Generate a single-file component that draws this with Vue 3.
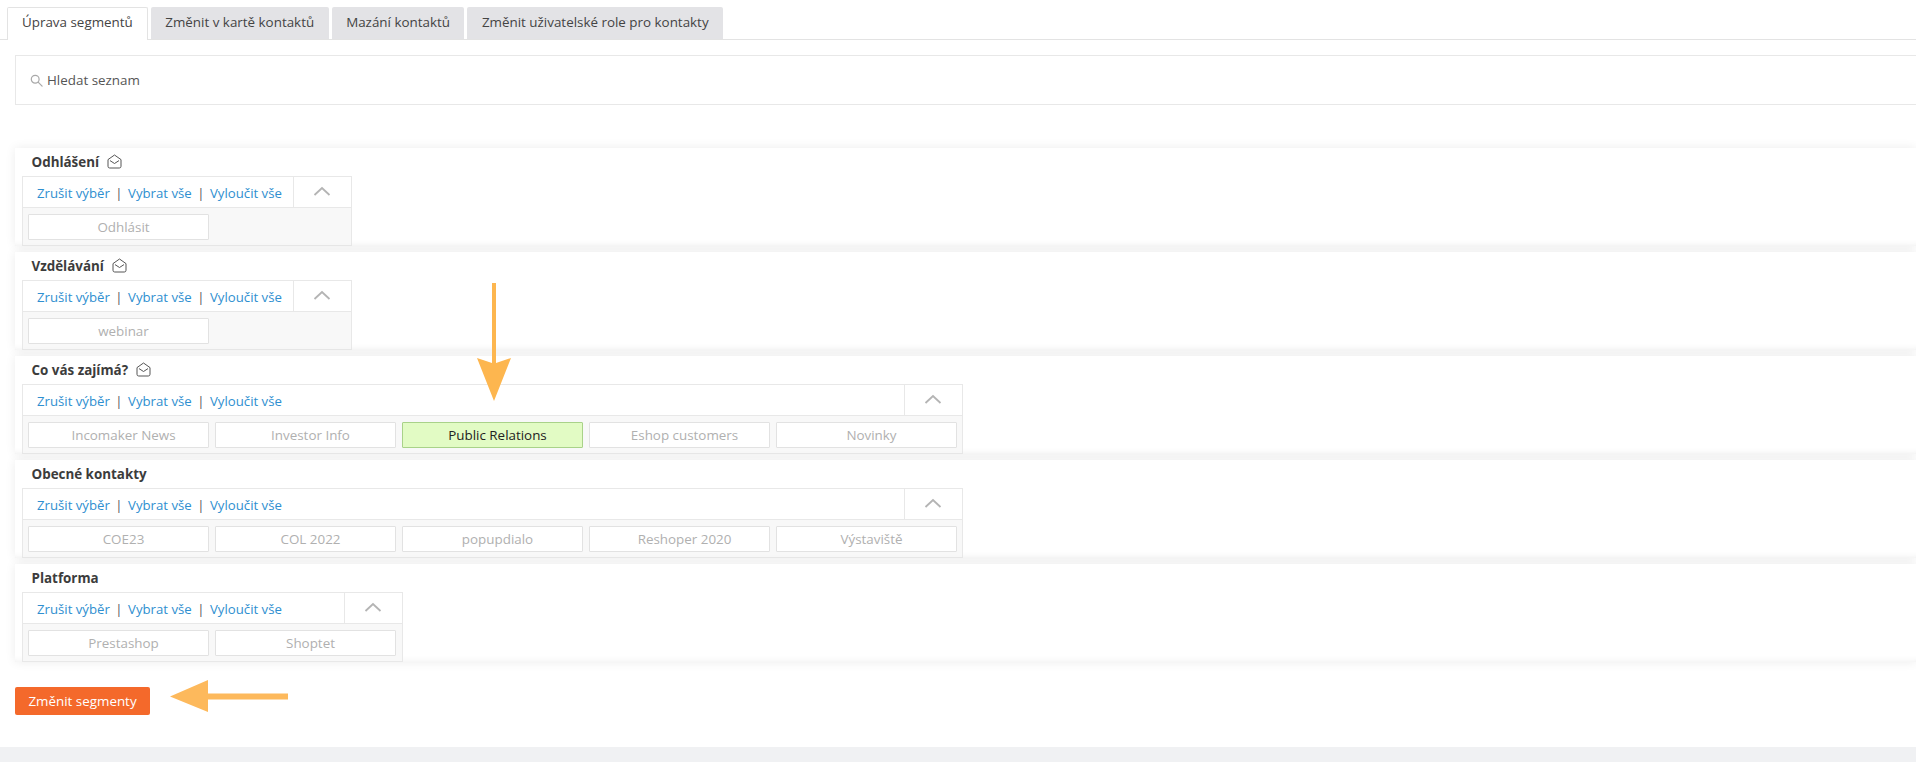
<script setup>
const tabs = ['Úprava segmentů', 'Změnit v kartě kontaktů', 'Mazání kontaktů', 'Změnit uživatelské role pro kontakty']
const groups = [
  { title: 'Odhlášení', icon: true, cls: 'w1', items: ['Odhlásit'] },
  { title: 'Vzdělávání', icon: true, cls: 'w1', items: ['webinar'] },
  { title: 'Co vás zajímá?', icon: true, cls: 'w5', items: ['Incomaker News', 'Investor Info', 'Public Relations', 'Eshop customers', 'Novinky'], active: 'Public Relations' },
  { title: 'Obecné kontakty', icon: false, cls: 'w5', items: ['COE23', 'COL 2022', 'popupdialo', 'Reshoper 2020', 'Výstaviště'] },
  { title: 'Platforma', icon: false, cls: 'w2', items: ['Prestashop', 'Shoptet'] }
]
</script>

<template>
  <div class="page">
    <nav class="tabs">
      <a v-for="(t, i) in tabs" :key="t" class="tab" :class="{ on: i === 0 }">{{ t }}</a>
    </nav>

    <div class="search">
      <svg class="lens" width="13" height="13" viewBox="0 0 13 13" fill="none" stroke="#a9a9a9" stroke-width="1.2">
        <circle cx="5.2" cy="5.2" r="3.9" />
        <path d="M8.1 8.1l4 4" stroke-linecap="round" />
      </svg>
      <span>Hledat seznam</span>
    </div>

    <section class="groups">
      <article v-for="g in groups" :key="g.title" class="card">
        <h3 class="title">
          {{ g.title }}
          <svg v-if="g.icon" class="mail" width="15" height="15" viewBox="0 0 15 15" fill="none" stroke="#555" stroke-width="1">
            <path d="M1 5.6 7.5 1 14 5.6v6.7a1.7 1.7 0 0 1-1.7 1.7H2.7A1.7 1.7 0 0 1 1 12.3z" stroke-linejoin="round" />
            <path d="M3.3 6.8 7.5 9.5l4.2-2.7" stroke-linecap="round" stroke-linejoin="round" />
          </svg>
        </h3>
        <div class="box" :class="g.cls">
          <div class="head">
            <div class="links">
              <a>Zrušit výběr</a><i>|</i><a>Vybrat vše</a><i>|</i><a>Vyloučit vše</a>
            </div>
            <div class="chev">
              <svg width="18" height="10" viewBox="0 0 18 10" fill="none" stroke="#b4b4b4" stroke-width="1.8">
                <path d="M1.5 9 9 2l7.5 7" />
              </svg>
            </div>
          </div>
          <div class="body">
            <button v-for="it in g.items" :key="it" type="button" class="opt" :class="{ active: it === g.active }">{{ it }}</button>
          </div>
        </div>
      </article>
    </section>

    <div class="actions">
      <button type="button" class="submit">Změnit segmenty</button>
    </div>

    <footer class="foot"></footer>

    <svg class="arrow a-down" width="34" height="120" viewBox="0 0 34 120">
      <path d="M15 0h4v80l15-5-17 43L0 75l15 5z" fill="#fdb64f" />
    </svg>
    <svg class="arrow a-left" width="118" height="33" viewBox="0 0 118 33">
      <path d="M118 13.5v6H38V32L0 16.5 38 0v13.5z" fill="#fdb95c" />
    </svg>
  </div>
</template>

<style>
html, body { margin: 0; background: #fff; }
</style>

<style scoped>
.page {
  position: relative;
  width: 1916px;
  height: 762px;
  overflow: hidden;
  background: #fff;
  font-family: "Open Sans", "Liberation Sans", sans-serif;
  font-size: 13.4px;
  color: #555;
  display: flex;
  flex-direction: column;
}
.tabs {
  display: flex;
  gap: 3px;
  margin-top: 7px;
  padding-left: 7px;
  border-bottom: 1px solid #e3e3e3;
  flex: none;
  height: 32px;
}
.tab {
  height: 32px;
  line-height: 31px;
  padding: 0 14.5px;
  background: #e3e3e6;
  color: #444;
  border-radius: 2px 2px 0 0;
  font-size: 13.4px;
  white-space: nowrap;
  box-sizing: border-box;
}
.tab.on {
  background: #fff;
  border: 1px solid #e3e3e3;
  border-bottom: 0;
  height: 33px;
  line-height: 29px;
  padding: 0 14px;
}
.search {
  flex: none;
  margin: 15px 0 0 15px;
  height: 50px;
  display: flex;
  align-items: center;
  gap: 4px;
  padding-left: 14px;
  border: 1px solid #e8e8e8;
  border-right: 0;
  box-sizing: border-box;
  color: #555;
  font-size: 13.4px;
}
.groups {
  flex: none;
  margin: 43px 0 0 15px;
  display: flex;
  flex-direction: column;
  gap: 6px;
}
.card {
  background: #fff;
  padding: 0 0 0 7px;
  height: 98px;
  box-shadow: 0 0 10px rgba(0, 0, 0, 0.08), inset 0 -7px 7px -7px rgba(0, 0, 0, 0.08);
}
.title {
  margin: 0;
  height: 28px;
  padding-left: 9.5px;
  font-size: 13.4px;
  font-weight: 700;
  line-height: 28px;
  color: #3c3c3c;
  display: flex;
  align-items: center;
  gap: 8px;
}
.mail { margin-top: -1px; }
.box {
  border: 1px solid #e8e8e8;
  box-sizing: border-box;
  height: 70px;
  background: #f8f8f8;
}
.w1 { width: 330px; }
.w2 { width: 381px; }
.w5 { width: 941px; }
.head {
  display: flex;
  height: 31px;
  background: #fff;
  border-bottom: 1px solid #e8e8e8;
  box-sizing: border-box;
}
.links {
  flex: 1;
  padding-left: 14px;
  line-height: 32px;
  font-size: 13.2px;
  white-space: nowrap;
}
.links a { color: #2f8fd0; }
.links i { font-style: normal; color: #555; margin: 0 5.5px; }
.chev {
  width: 58px;
  border-left: 1px solid #e8e8e8;
  display: flex;
  align-items: center;
  justify-content: center;
  padding: 0 2px 3px 0;
  box-sizing: border-box;
}
.body {
  display: flex;
  gap: 6px;
  padding: 6px 0 0 5px;
}
.opt {
  width: 181px;
  height: 26px;
  padding: 0 0 0 10px;
  background: #fff;
  border: 1px solid #e2e2e2;
  border-radius: 1px;
  box-sizing: border-box;
  font-family: inherit;
  font-size: 13.4px;
  color: #b0b0b0;
  line-height: 24px;
}
.opt.active {
  background: #e2fbc4;
  border-color: #a9d289;
  color: #222;
}
.actions {
  flex: none;
  margin: 25px 0 0 15px;
}
.submit {
  display: block;
  width: 135px;
  height: 28px;
  padding: 0;
  border: 0;
  border-radius: 2px;
  background: #f4692b;
  color: #fff;
  font-family: inherit;
  font-size: 13.4px;
}
.foot {
  position: absolute;
  left: 0;
  right: 0;
  bottom: 0;
  height: 15px;
  background: #f0f1f3;
}
.arrow { position: absolute; }
.a-down { left: 477px; top: 283px; }
.a-left { left: 170px; top: 680px; }
</style>
